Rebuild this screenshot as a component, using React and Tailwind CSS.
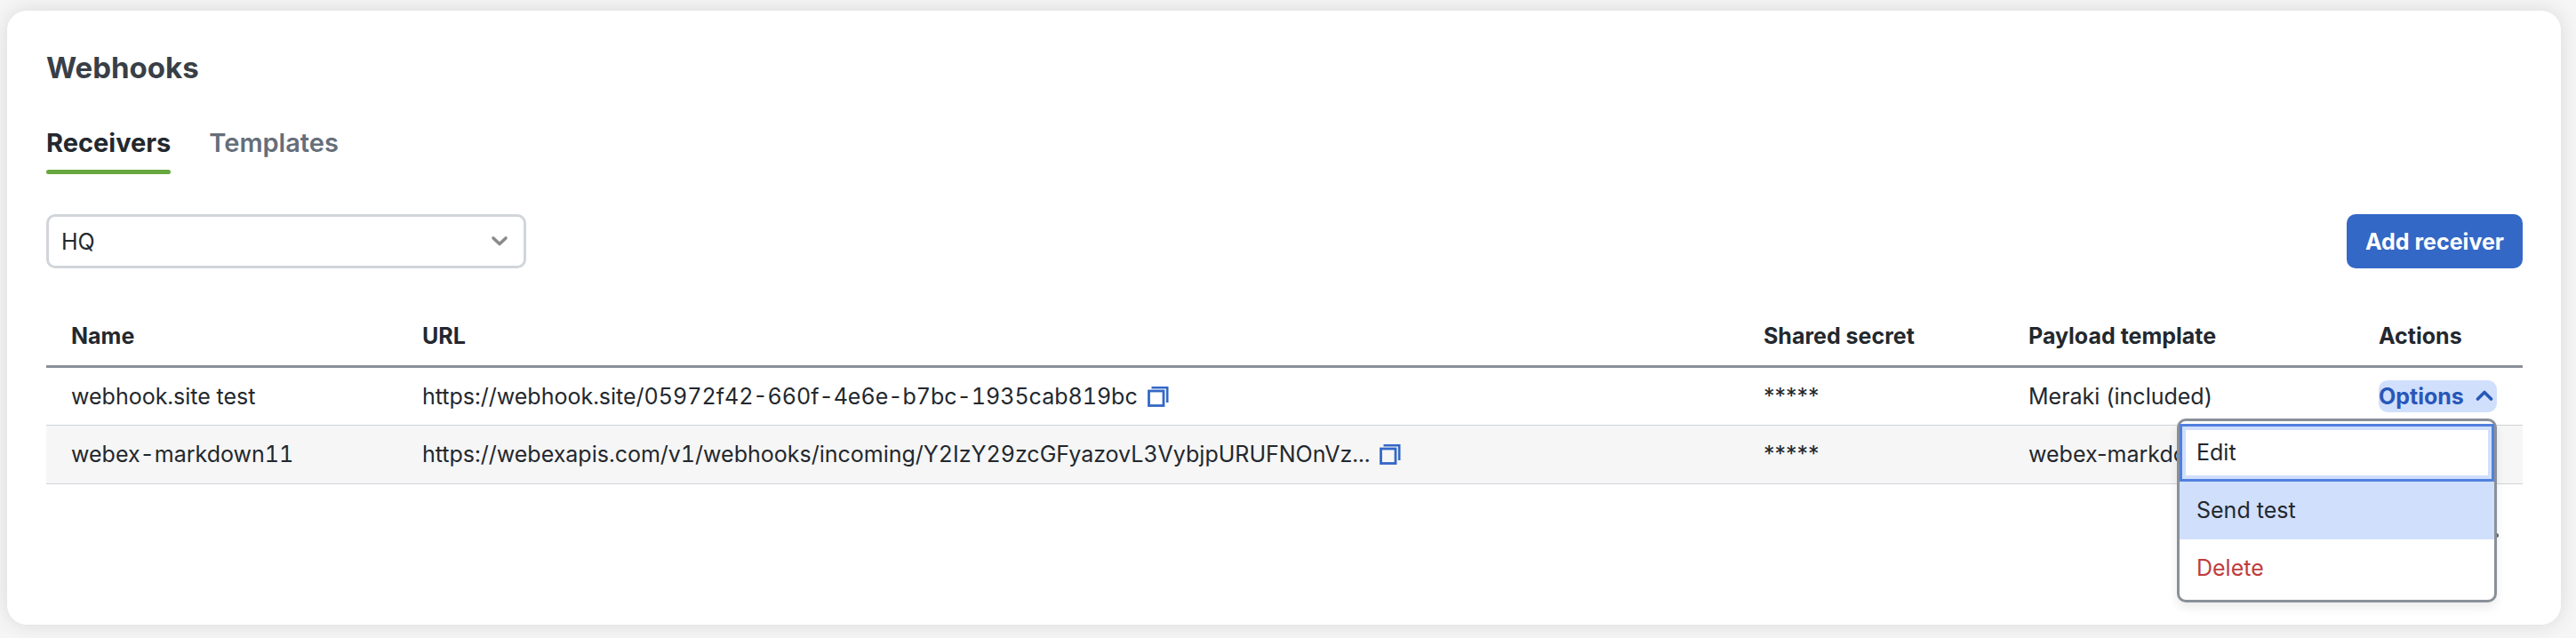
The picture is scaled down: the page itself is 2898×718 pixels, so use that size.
const rows = [
  {
    name: 'webhook.site test',
    url: 'https://webhook.site/05972f42-660f-4e6e-b7bc-1935cab819bc',
    template: 'Meraki (included)',
  },
  {
    name: 'webex-markdown11',
    url: 'https://webexapis.com/v1/webhooks/incoming/Y2IzY29zcGFyazovL3VybjpURUFNOnVz...',
    template: 'webex-markdown11',
  },
];

function CopyIcon() {
  return (
    <svg width="24" height="24" viewBox="0 0 24 24" fill="none" stroke="#3468c6" aria-hidden="true">
      <rect x="1.5" y="6" width="16.5" height="16.5" strokeWidth="2.8" />
      <path d="M4.5 2.2H22.2V19" strokeWidth="2.6" />
    </svg>
  );
}

function OptionsCell({ open }) {
  return (
    <div className="relative flex w-[133px]">
      <button
        type="button"
        aria-haspopup="menu"
        aria-expanded={open}
        className={`flex h-9 w-full items-center justify-between rounded-[10px] pr-1 font-bold text-[#2857b8] ${open ? 'bg-[#d0dffc]' : ''}`}
      >
        Options
        <svg width="20" height="20" viewBox="0 0 20 20" fill="none" stroke="currentColor" strokeWidth="3.6" strokeLinecap="round" strokeLinejoin="round" aria-hidden="true">
          <path d={open ? 'M2.5 13L10 5.5L17.5 13' : 'M2.5 7L10 14.5L17.5 7'} />
        </svg>
      </button>
      {open && (
        <div
          role="menu"
          className="absolute top-full right-0 z-10 mt-[7px] w-[360px] rounded-[10px] border-3 border-[#8a9099] bg-white py-[3px] shadow-[0_6px_12px_rgba(0,0,0,0.08)]"
        >
          <button type="button" role="menuitem" className="block h-[65px] w-full border-3 border-[#5180de] px-4 text-left shadow-[inset_0_0_0_4px_#d0dffc]">
            Edit
          </button>
          <button type="button" role="menuitem" className="block h-[65px] w-full bg-[#d0dffc] px-[19px] text-left">
            Send test
          </button>
          <button type="button" role="menuitem" className="block h-[65px] w-full px-[19px] text-left text-[#bf3c3c]">
            Delete
          </button>
        </div>
      )}
    </div>
  );
}

export default function App() {
  return (
    <div className="min-h-screen bg-[#f6f6f6] pt-3 pr-[17px] pb-4 pl-2 font-['Inter',sans-serif] text-[25px] leading-[32px] text-[#23282e]">
      <main className="rounded-[22px] bg-white pt-11 pr-[43px] pb-[98px] pl-11 shadow-[0_0_24px_rgba(0,0,0,0.12)]">
        <h1 className="text-[33px] leading-[40px] font-bold text-[#393f47]">Webhooks</h1>
        <nav className="mt-10 flex gap-[43px] text-[29px] leading-[50px] font-bold">
          <a href="#receivers" aria-current="page" className="flex flex-col gap-[5px]">
            Receivers
            <span className="h-[5px] rounded-full bg-[#67a73f]" />
          </a>
          <a href="#templates" className="font-semibold text-[#656e79]">Templates</a>
        </nav>
        <div className="mt-[45px] flex items-center justify-between">
          <div className="relative w-[540px]">
            <select aria-label="Network" className="h-[61px] w-full appearance-none rounded-[10px] border-3 border-[#d1d5da] bg-white px-[14px]">
              <option>HQ</option>
            </select>
            <svg className="pointer-events-none absolute top-5 right-5" width="20" height="20" viewBox="0 0 20 20" fill="none" stroke="#8a8a8a" strokeWidth="3.6" strokeLinecap="round" strokeLinejoin="round" aria-hidden="true">
              <path d="M3 7L10 13.5L17 7" />
            </svg>
          </div>
          <button type="button" className="h-[61px] rounded-[10px] bg-[#3468c6] px-[21px] font-bold text-white">
            Add receiver
          </button>
        </div>
        <table className="mt-[43px] w-full table-fixed text-left">
          <thead>
            <tr className="h-[67px] border-b-3 border-[#8a9099]">
              <th className="w-[395px] px-7 font-bold">Name</th>
              <th className="px-7 font-bold">URL</th>
              <th className="w-[298px] px-7 font-bold">Shared secret</th>
              <th className="w-[394px] px-7 font-bold">Payload template</th>
              <th className="w-[190px] px-7 font-bold">Actions</th>
            </tr>
          </thead>
          <tbody>
            {rows.map((row, i) => (
              <tr key={row.name} className="h-[66px] border-b border-[#cfd3d8] even:bg-[#f6f6f6]">
                <td className="px-7 tabular-nums">{row.name}</td>
                <td className="px-7 tabular-nums">
                  <div className="flex items-center gap-[11px]">
                    <span>{row.url}</span>
                    <button type="button" aria-label="Copy URL"><CopyIcon /></button>
                  </div>
                </td>
                <td className="px-7">*****</td>
                <td className="px-7">{row.template}</td>
                <td className="px-7"><OptionsCell open={i === 0} /></td>
              </tr>
            ))}
          </tbody>
        </table>
        <div className="flex justify-end pt-[55px] pr-[27px]">
          <span className="size-[5px] rounded-sm bg-[#5f666f]" />
        </div>
      </main>
    </div>
  );
}
